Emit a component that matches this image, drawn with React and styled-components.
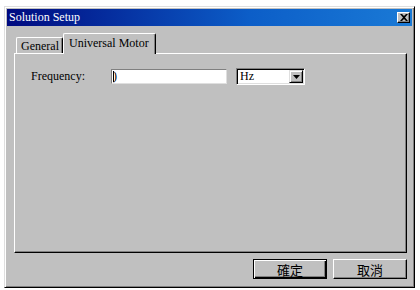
import React from "react";
import styled, { createGlobalStyle } from "styled-components";

const Global = createGlobalStyle`
  html, body {
    margin: 0;
    padding: 0;
    background: #ffffff;
  }
`;

const serif = `"Liberation Serif", "Times New Roman", "DejaVu Serif", serif`;

const Page = styled.div`
  padding: 6px 0 0 4px;
  font-family: ${serif};
`;

const Window = styled.div`
  width: 411px;
  height: 282px;
  box-sizing: border-box;
  background: #c0c0c0;
  border: 1px solid;
  border-color: #dfdfdf #000000 #000000 #dfdfdf;
  box-shadow: inset 1px 1px 0 #ffffff, inset -1px -1px 0 #808080;
  padding: 2px;
  display: flex;
  flex-direction: column;
`;

const TitleBar = styled.div`
  height: 18px;
  display: flex;
  align-items: center;
  justify-content: space-between;
  padding: 0 2px 0 2px;
  background: linear-gradient(to right, #000a80, #0c5ec8 60%, #1a7ad6);
`;

const Title = styled.span`
  color: #ffffff;
  font-family: ${serif};
  font-size: 12px;
`;

const CloseButton = styled.div`
  width: 13px;
  height: 11px;
  box-sizing: border-box;
  background: #c0c0c0;
  border: 1px solid;
  border-color: #ffffff #000000 #000000 #ffffff;
  box-shadow: inset -1px -1px 0 #808080;
  display: flex;
  align-items: center;
  justify-content: center;
`;

const Body = styled.div`
  flex: 1;
  display: flex;
  flex-direction: column;
  padding: 7px 5px 6px 7px;
`;

const TabStrip = styled.div`
  display: flex;
  align-items: flex-end;
  height: 20px;
  padding-left: 2px;
  position: relative;
  z-index: 1;
`;

const Tab = styled.div`
  box-sizing: border-box;
  height: ${(p) => (p.$active ? 21 : 16)}px;
  margin-bottom: ${(p) => (p.$active ? -1 : 0)}px;
  padding: ${(p) => (p.$active ? "1px 6px 0 5px" : "0 3px 0 4px")};
  background: #c0c0c0;
  border-top: 1px solid #ffffff;
  border-left: 1px solid #ffffff;
  border-right: 1px solid #000000;
  box-shadow: inset -1px 0 0 #808080;
  border-top-left-radius: 2px;
  border-top-right-radius: 2px;
  font-family: ${serif};
  font-size: 12px;
  color: #000000;
  line-height: 16px;
  white-space: nowrap;
`;

const Panel = styled.div`
  height: 200px;
  box-sizing: border-box;
  border: 1px solid;
  border-color: #ffffff #000000 #000000 #ffffff;
  box-shadow: inset -1px -1px 0 #808080;
  padding: 14px 0 0 16px;
`;

const FieldRow = styled.div`
  display: flex;
  align-items: center;
  height: 17px;
`;

const Label = styled.span`
  width: 80px;
  font-family: ${serif};
  font-size: 12px;
  color: #000000;
`;

const TextBox = styled.div`
  width: 116px;
  height: 15px;
  box-sizing: border-box;
  background: #ffffff;
  border: 1px solid;
  border-color: #808080 #dfdfdf #dfdfdf #808080;
  display: flex;
  align-items: center;
  padding-left: 1px;
  font-family: ${serif};
  font-size: 12px;
`;

const Caret = styled.span`
  display: inline-block;
  width: 1px;
  height: 11px;
  background: #000000;
`;

const Select = styled.div`
  margin-left: 9px;
  width: 69px;
  height: 17px;
  box-sizing: border-box;
  background: #ffffff;
  border: 1px solid;
  border-color: #808080 #ffffff #ffffff #808080;
  box-shadow: inset 1px 1px 0 #000000, inset -1px -1px 0 #dfdfdf;
  display: flex;
  align-items: center;
  justify-content: space-between;
  padding: 1px 1px 1px 3px;
  font-family: ${serif};
  font-size: 12px;
`;

const DropButton = styled.div`
  width: 14px;
  height: 13px;
  box-sizing: border-box;
  background: #c0c0c0;
  border: 1px solid;
  border-color: #dfdfdf #000000 #000000 #dfdfdf;
  box-shadow: inset 1px 1px 0 #ffffff, inset -1px -1px 0 #808080;
  display: flex;
  align-items: center;
  justify-content: center;
`;

const Footer = styled.div`
  display: flex;
  justify-content: flex-end;
  gap: 6px;
  margin-top: 6px;
`;

const Button = styled.div`
  width: 74px;
  height: 20px;
  box-sizing: border-box;
  background: #c0c0c0;
  border: 1px solid;
  border-color: ${(p) =>
    p.$default ? "#000000" : "#ffffff #000000 #000000 #ffffff"};
  box-shadow: ${(p) =>
    p.$default
      ? "inset 1px 1px 0 #ffffff, inset -1px -1px 0 #000000, inset -2px -2px 0 #808080"
      : "inset -1px -1px 0 #808080"};
  display: flex;
  align-items: center;
  justify-content: center;
  font-family: "Noto Sans CJK TC", sans-serif;
  font-size: 13px;
  color: #000000;
  line-height: 1;
`;

export default function App() {
  return (
    <>
      <Global />
      <Page>
        <Window>
          <TitleBar>
            <Title>Solution Setup</Title>
            <CloseButton>
              <svg width="8" height="7" viewBox="0 0 8 7">
                <path
                  d="M0 0h2l2 2 2-2h2L5 3.5 8 7H6L4 5 2 7H0l3-3.5z"
                  fill="#000"
                />
              </svg>
            </CloseButton>
          </TitleBar>
          <Body>
            <TabStrip>
              <Tab>General</Tab>
              <Tab $active>Universal Motor</Tab>
            </TabStrip>
            <Panel>
              <FieldRow>
                <Label>Frequency:</Label>
                <TextBox>
                  <Caret />
                  <span style={{ marginLeft: -1 }}>)</span>
                </TextBox>
                <Select>
                  <span>Hz</span>
                  <DropButton>
                    <svg width="7" height="4" viewBox="0 0 7 4">
                      <path d="M0 0h7L3.5 4z" fill="#000" />
                    </svg>
                  </DropButton>
                </Select>
              </FieldRow>
            </Panel>
            <Footer>
              <Button $default>確定</Button>
              <Button>取消</Button>
            </Footer>
          </Body>
        </Window>
      </Page>
    </>
  );
}
